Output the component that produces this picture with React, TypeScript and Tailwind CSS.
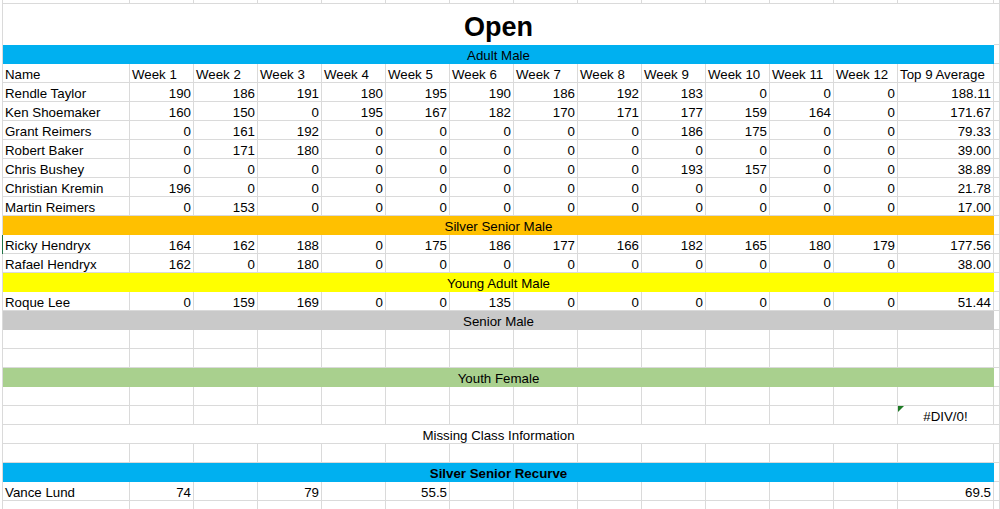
import React from "react";

const G = "grid grid-cols-[127px_repeat(12,64px)_96px_1fr]";
const cell = "h-[19px] border-r border-b border-[#dadada] pt-[3px] leading-[15px] whitespace-nowrap overflow-hidden";

type Row = [string, (number | string)[], string];

const adult: Row[] = [
  ["Rendle Taylor", [190, 186, 191, 180, 195, 190, 186, 192, 183, 0, 0, 0], "188.11"],
  ["Ken Shoemaker", [160, 150, 0, 195, 167, 182, 170, 171, 177, 159, 164, 0], "171.67"],
  ["Grant Reimers", [0, 161, 192, 0, 0, 0, 0, 0, 186, 175, 0, 0], "79.33"],
  ["Robert Baker", [0, 171, 180, 0, 0, 0, 0, 0, 0, 0, 0, 0], "39.00"],
  ["Chris Bushey", [0, 0, 0, 0, 0, 0, 0, 0, 193, 157, 0, 0], "38.89"],
  ["Christian Kremin", [196, 0, 0, 0, 0, 0, 0, 0, 0, 0, 0, 0], "21.78"],
  ["Martin Reimers", [0, 153, 0, 0, 0, 0, 0, 0, 0, 0, 0, 0], "17.00"],
];
const silver: Row[] = [
  ["Ricky Hendryx", [164, 162, 188, 0, 175, 186, 177, 166, 182, 165, 180, 179], "177.56"],
  ["Rafael Hendryx", [162, 0, 180, 0, 0, 0, 0, 0, 0, 0, 0, 0], "38.00"],
];
const young: Row[] = [["Roque Lee", [0, 159, 169, 0, 0, 135, 0, 0, 0, 0, 0, 0], "51.44"]];

function DataRow({ r, accent }: { r: Row; accent?: boolean }) {
  return (
    <div className={`${G} border-l ${accent ? "border-l-[#217346]" : "border-l-[#dadada]"}`}>
      <div className={`${cell} pl-[2px]`}>{r[0]}</div>
      {r[1].map((v, i) => (
        <div key={i} className={`${cell} pr-[2px] text-right`}>
          {v}
        </div>
      ))}
      <div className={`${cell} pr-[2px] text-right`}>{r[2]}</div>
      <div className={cell}></div>
    </div>
  );
}

function Blank() {
  return (
    <div className={`${G} border-l border-l-[#dadada]`}>
      {Array.from({ length: 15 }).map((_, i) => (
        <div key={i} className={cell}></div>
      ))}
    </div>
  );
}

function Band({ label, bg, bold }: { label: string; bg: string; bold?: boolean }) {
  return (
    <div className="grid grid-cols-[991px_1fr] border-l border-l-[#dadada]">
      <div className={`h-[19px] ${bg} pt-[3px] leading-[15px] text-center ${bold ? "font-bold" : ""}`}>{label}</div>
      <div className={cell}></div>
    </div>
  );
}

export default function App() {
  return (
    <div className="w-[1000px] h-[509px] overflow-hidden bg-white text-black font-['Liberation_Sans',Arial,sans-serif] text-[13.3px]">
      <div className="ml-[2px]">
        <div className={`${G} border-l border-l-[#dadada]`}>
          {Array.from({ length: 15 }).map((_, i) => (
            <div key={i} className="h-[4px] border-r border-b border-[#dadada]"></div>
          ))}
        </div>
        <div className="grid grid-cols-[991px_1fr] border-l border-l-[#dadada]">
          <div className="h-[41px] pt-[10px] leading-[27px] text-center text-[27px] font-bold">Open</div>
          <div className="h-[41px] border-r border-b border-[#dadada]"></div>
        </div>
        <Band label="Adult Male" bg="bg-[#00b0f0]" />
        <div className={`${G} border-l border-l-[#dadada]`}>
          <div className={`${cell} pl-[2px]`}>Name</div>
          {Array.from({ length: 12 }).map((_, i) => (
            <div key={i} className={`${cell} pl-[2px]`}>
              Week {i + 1}
            </div>
          ))}
          <div className={`${cell} pl-[2px]`}>Top 9 Average</div>
          <div className={cell}></div>
        </div>
        {adult.map((r) => (
          <DataRow key={r[0]} r={r} />
        ))}
        <Band label="Silver Senior Male" bg="bg-[#ffc000]" />
        {silver.map((r, i) => (
          <DataRow key={r[0]} r={r} accent={i === 0} />
        ))}
        <Band label="Young Adult Male" bg="bg-[#ffff00]" />
        {young.map((r) => (
          <DataRow key={r[0]} r={r} />
        ))}
        <Band label="Senior Male" bg="bg-[#c9c9c9]" />
        <Blank />
        <Blank />
        <Band label="Youth Female" bg="bg-[#a9d08e]" />
        <Blank />
        <div className={`${G} border-l border-l-[#dadada]`}>
          {Array.from({ length: 13 }).map((_, i) => (
            <div key={i} className={cell}></div>
          ))}
          <div className={`${cell} relative text-center`}>
            <svg className="absolute left-0 top-0" width="6" height="6" viewBox="0 0 6 6">
              <polygon points="0,0 6,0 0,6" fill="#1d7a24" />
            </svg>
            #DIV/0!
          </div>
          <div className={cell}></div>
        </div>
        <div className="grid grid-cols-[991px_1fr] border-l border-l-[#dadada]">
          <div className="h-[19px] border-b border-[#dadada] pt-[3px] leading-[15px] text-center">Missing Class Information</div>
          <div className={cell}></div>
        </div>
        <Blank />
        <Band label="Silver Senior Recurve" bg="bg-[#00b0f0]" bold />
        <div className={`${G} border-l border-l-[#dadada]`}>
          <div className={`${cell} pl-[2px]`}>Vance Lund</div>
          {Array.from({ length: 12 }).map((_, i) => (
            <div key={i} className={`${cell} pr-[2px] text-right`}>
              {i === 0 ? "74" : i === 2 ? "79" : i === 4 ? "55.5" : ""}
            </div>
          ))}
          <div className={`${cell} pr-[2px] text-right`}>69.5</div>
          <div className={cell}></div>
        </div>
        <Blank />
      </div>
    </div>
  );
}
